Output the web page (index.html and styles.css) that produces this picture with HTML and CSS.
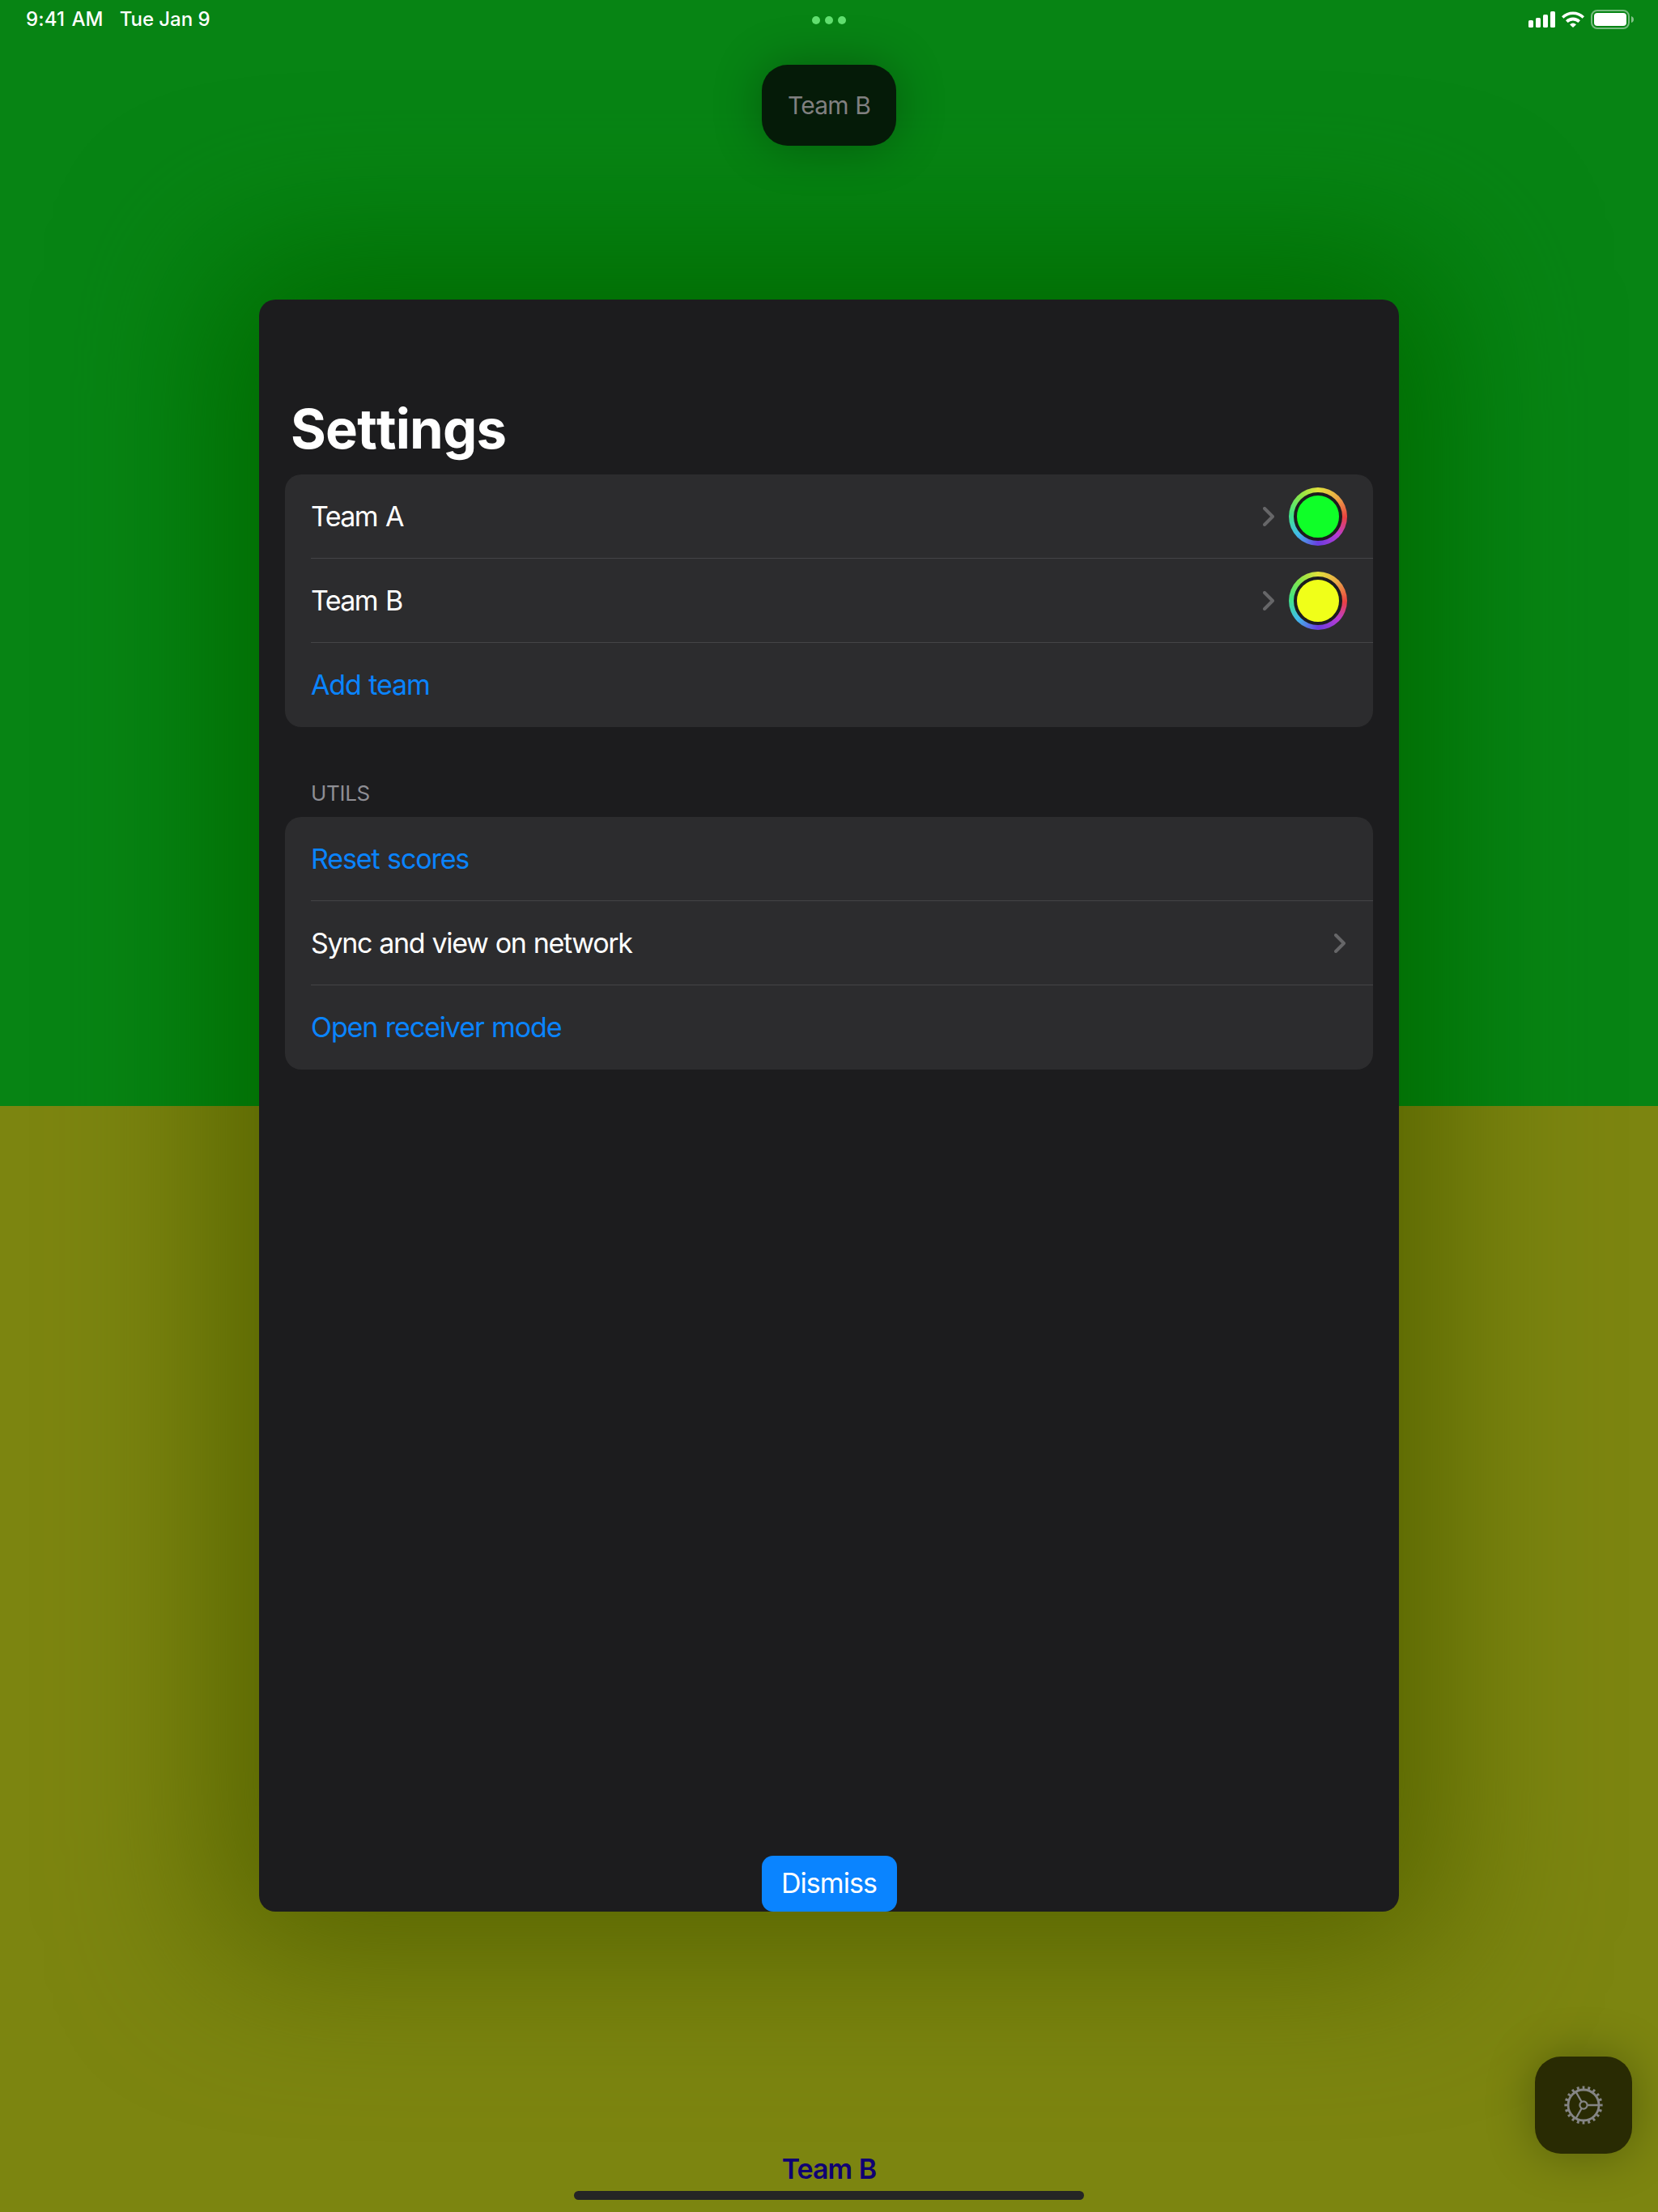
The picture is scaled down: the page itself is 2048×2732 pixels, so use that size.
FILE: index.html
```html
<!DOCTYPE html>
<html lang="en">
<head>
<meta charset="utf-8">
<title>Settings</title>
<link rel="stylesheet" href="styles.css">
</head>
<body>
<div class="screen">
  <section class="team team-a">
    <header class="status">
      <div class="status-left"><span class="time">9:41 AM</span><span class="date">Tue Jan 9</span></div>
      <div class="dots"><i></i><i></i><i></i></div>
      <svg class="status-icons" width="132" height="28" viewBox="0 0 132 28" fill="#fff">
        <rect x="0" y="15" width="6" height="9" rx="1.6"/>
        <rect x="9" y="12" width="6" height="12" rx="1.6"/>
        <rect x="18" y="8" width="6" height="16" rx="1.6"/>
        <rect x="27" y="4" width="6" height="20" rx="1.6"/>
        <path d="M41 10.2 A20 20 0 0 1 69 10.2 L66.6 12.8 A16.4 16.4 0 0 0 43.4 12.8 Z"/>
        <path d="M46 15.2 A13 13 0 0 1 64 15.2 L61.4 17.9 A9.4 9.4 0 0 0 48.6 17.9 Z"/>
        <path d="M51 20.2 A6.2 6.2 0 0 1 59 20.2 L55.6 23.6 Q55 24.1 54.4 23.6 Z"/>
        <rect x="78" y="3" width="46" height="22" rx="7" fill="none" stroke="#fff" stroke-opacity=".45" stroke-width="2"/>
        <rect x="81" y="6" width="40" height="16" rx="4"/>
        <path d="M127 10 Q130 11 130 14 Q130 17 127 18 Z" fill-opacity=".5"/>
      </svg>
    </header>
    <div class="pill">Team B</div>
  </section>
  <section class="team team-b">
    <div class="team-name">Team B</div>
  </section>

  <button class="gear" aria-label="Settings">
    <svg width="48" height="48" viewBox="-24 -24 48 48" fill="none" stroke="#858585">
      <circle r="19" stroke-width="2.8"/>
      <circle r="21.8" stroke-width="3.6" stroke-dasharray="2.85 4" stroke-dashoffset="1.43" pathLength="137"/>
      <circle r="4.6" stroke-width="2.2"/>
      <path stroke-width="2.4" d="M4.6 0H19 M-2.3 -4 L-9.5 -16.5 M-2.3 4 L-9.5 16.5"/>
    </svg>
  </button>
  <div class="home-indicator"></div>

  <main class="modal">
    <h1>Settings</h1>
    <ul class="list">
      <li class="name"><span>Team A</span><span class="end"><svg class="chev" width="14" height="24" viewBox="0 0 14 24"><path d="M2 2L12 12L2 22"/></svg><span class="well"><b class="green"></b></span></span></li>
      <li class="name"><span>Team B</span><span class="end"><svg class="chev" width="14" height="24" viewBox="0 0 14 24"><path d="M2 2L12 12L2 22"/></svg><span class="well"><b class="yellow"></b></span></span></li>
      <li class="link">Add team</li>
    </ul>
    <h2>UTILS</h2>
    <ul class="list">
      <li class="link">Reset scores</li>
      <li class="sync">Sync and view on network<span class="end"><svg class="chev" width="14" height="24" viewBox="0 0 14 24"><path d="M2 2L12 12L2 22"/></svg></span></li>
      <li class="link">Open receiver mode</li>
    </ul>
    <button class="dismiss">Dismiss</button>
  </main>
</div>
</body>
</html>
```
FILE: styles.css
```css
* { box-sizing: border-box; margin: 0; padding: 0; }
body { font-family: Inter, "Liberation Sans", sans-serif; color: #fff; }
button { border: 0; font: inherit; color: inherit; }

.screen { position: relative; width: 2048px; height: 2732px; overflow: hidden; display: flex; flex-direction: column; }
.team { position: relative; height: 1366px; overflow: hidden; display: flex; flex-direction: column; align-items: center; }
.team > * { position: relative; z-index: 1; }
.team-a { background: #078414; }
.team-b { background: #7c8510; justify-content: flex-end; padding-bottom: 32px; }

/* each half tints the sheet's shadow with its own colour */
.team::before { content: ""; position: absolute; left: 320px; width: 1408px; height: 1991px; border-radius: 20px; }
.team-a::before { top: 370px; box-shadow: 0 0 190px 56px #006b00; }
.team-b::before { top: -996px; box-shadow: 0 0 190px 56px #576500; }

.status { width: 100%; height: 50px; padding: 0 32px; display: grid; grid-template-columns: 1fr auto 1fr; align-items: center; }
.status-left { display: flex; gap: 20px; font-size: 24px; line-height: 30px; font-weight: 500; padding-bottom: 2px; }
.time { letter-spacing: .2px; word-spacing: 1.5px; }
.date { letter-spacing: -.05px; }
.dots { display: flex; gap: 6px; }
.dots i { width: 10px; height: 10px; border-radius: 50%; background: #62e070; }
.status-icons { justify-self: end; margin: -2px -4px 0 0; }

.pill { margin-top: 30px; width: 166px; height: 100px; border-radius: 32px; background: #051b08; color: #808080; font-size: 30px; line-height: 100px; text-align: center; letter-spacing: -.85px; word-spacing: 1px; box-shadow: 0 0 60px rgba(0, 0, 0, .3); }
.team-name { color: #0f0073; font-size: 34px; line-height: 42px; font-weight: 600; letter-spacing: -1px; word-spacing: 1px; }

.gear { position: absolute; left: 1896px; top: 2540px; width: 120px; height: 120px; border-radius: 32px; background: #292b03; box-shadow: 0 0 60px rgba(0, 0, 0, .3); display: grid; place-items: center; }
.home-indicator { position: absolute; left: 709px; top: 2706px; width: 630px; height: 11px; border-radius: 6px; background: #252525; }

.modal { position: absolute; left: 320px; top: 370px; width: 1408px; height: 1991px; border-radius: 20px; background: #1c1c1e; padding: 119px 32px 0; display: flex; flex-direction: column; }
h1 { font-size: 67px; line-height: 82px; font-weight: 700; font-kerning: none; letter-spacing: -.8px; padding-left: 7px; margin-bottom: 15px; }
h2 { font-size: 26px; line-height: 32px; font-weight: 400; color: #8e8e94; letter-spacing: -.3px; padding-left: 32px; margin: 66px 0 13px; }
.list { list-style: none; background: #2c2c2e; border-radius: 20px; padding-left: 32px; }
.list li { height: 104px; padding: 0 32px 1px 0; display: flex; align-items: center; justify-content: space-between; font-size: 34px; letter-spacing: -1.1px; word-spacing: 1px; }
.list .name { padding-bottom: 0; letter-spacing: -1.6px; word-spacing: 2px; }
.list .name > span:first-child { padding-bottom: 2px; }
.list .sync { letter-spacing: -1.34px; }
.list li:not(:last-child) { box-shadow: inset 0 -1px #444447; }
.list .link { color: #0a84ff; }
.end { display: flex; align-items: center; gap: 18px; }
.end .chev:last-child { margin-right: 2px; }
.chev { fill: none; stroke: #666668; stroke-width: 4; stroke-linecap: round; stroke-linejoin: round; }
.well { width: 72px; height: 72px; border-radius: 50%; padding: 6px; background: conic-gradient(#e1e13c, #ebaa46 45deg, #eb4141 92deg, #b93cd2 132deg, #693ce1 180deg, #41bbeb 228deg, #41e682 275deg, #8ce646 320deg, #e1e13c); }
.well b { display: block; width: 60px; height: 60px; border-radius: 50%; border: 4px solid #1c1c1e; }
.green { background: #0fff28; }
.yellow { background: #f0ff19; }
.dismiss { margin: auto auto 0; width: 167px; height: 69px; padding-bottom: 2px; border-radius: 14px; background: #0a84ff; font-size: 34px; letter-spacing: -.95px; }
```
